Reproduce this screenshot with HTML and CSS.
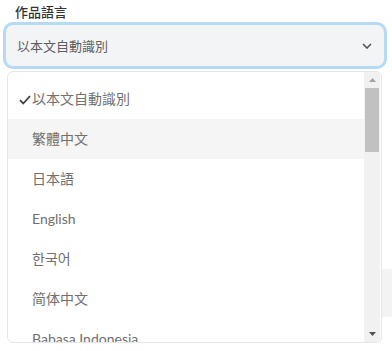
FILE: index.html
```html
<!DOCTYPE html>
<html lang="zh-Hant">
<head>
  <meta charset="UTF-8" />
  <title>作品語言</title>
  <link rel="stylesheet" href="styles.css">
</head>
<body>
  <div class="field">
    <div class="label">作品語言</div>
    <div class="select">
      <span>以本文自動識別</span>
      <svg class="chev" width="10" height="6" viewBox="0 0 10 6"><path d="M1 1l4 4 4-4" fill="none" stroke="#555" stroke-width="1.6"/></svg>
    </div>
  </div>

  <div class="row">
    <div class="dropdown">
      <ul class="list">
        <li class="selected"><svg class="check" width="12" height="10" viewBox="0 0 12 10"><path d="M1 5.2l3.2 3.3L11 1.2" fill="none" stroke="#444" stroke-width="1.8"/></svg>以本文自動識別</li>
        <li class="hover">繁體中文</li>
        <li>日本語</li>
        <li>English</li>
        <li>한국어</li>
        <li>简体中文</li>
        <li>Babasa Indonesia</li>
      </ul>
      <div class="scrollbar">
        <div class="arrow"><svg width="7" height="4" viewBox="0 0 7 4"><path d="M0 4h7L3.5 0z" fill="#a3a3a3"/></svg></div>
        <div class="track"><div class="thumb"></div></div>
        <div class="arrow"><svg width="7" height="4" viewBox="0 0 7 4"><path d="M0 0h7L3.5 4z" fill="#505050"/></svg></div>
      </div>
    </div>
    <div class="stub"></div>
  </div>
</body>
</html>
```

FILE: styles.css
```css
body {
  margin: 0;
  font-family: Lato, "Noto Sans CJK TC", sans-serif;
  background: #fff;
  color: #555;
}
.field {
  padding: 3px 5px 0 3px;
}
.label {
  font-size: 13px;
  font-weight: 500;
  color: #333;
  margin-left: 12px;
  height: 19px;
  line-height: 19px;
}
.select {
  height: 41px;
  border: 3px solid #b5dbf4;
  border-radius: 10px;
  background: #f3f4f6;
  display: flex;
  align-items: center;
  justify-content: space-between;
  padding: 0 12px 0 11px;
  font-size: 13px;
  color: #5e5e5e;
}
.chev {
  margin-top: 1px;
}
.row {
  display: flex;
  margin-top: 2px;
}
.dropdown {
  margin-left: 7px;
  width: 374px;
  height: 270px;
  border: 1px solid #e6e6e6;
  border-radius: 6px;
  display: flex;
  overflow: hidden;
}
.list {
  list-style: none;
  margin: 0;
  padding: 7px 0 0;
  flex: 1;
}
.list li {
  height: 40px;
  line-height: 40px;
  padding-left: 24px;
  font-size: 14px;
  color: #707070;
  white-space: nowrap;
}
.list li.selected {
  padding-left: 11px;
}
.check {
  margin-right: 1px;
  vertical-align: -1px;
}
.list li.hover {
  background: #f5f5f5;
}
.scrollbar {
  width: 16px;
  background: #f1f1f1;
  display: flex;
  flex-direction: column;
  margin-right: 1px;
}
.arrow {
  height: 16px;
  display: flex;
  align-items: center;
  justify-content: center;
}
.track {
  flex: 1;
  padding: 0 1px;
}
.thumb {
  height: 64px;
  background: #c1c1c1;
}
.stub {
  width: 10px;
  height: 48px;
  margin-top: 198px;
  background: #f3f3f3;
}
```
